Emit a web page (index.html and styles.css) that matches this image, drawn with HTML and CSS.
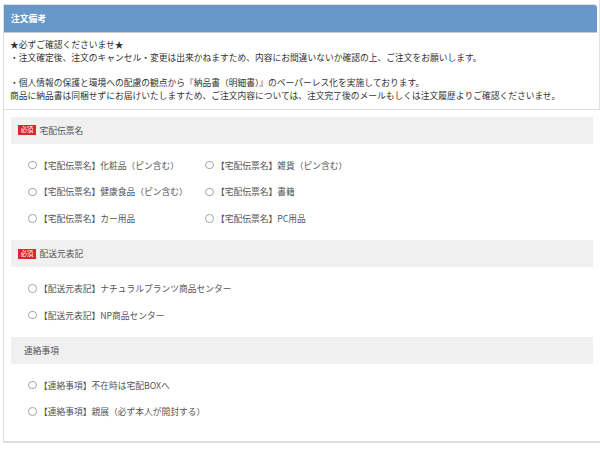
FILE: index.html
```html
<!DOCTYPE html>
<html lang="ja">
<head>
<meta charset="utf-8">
<title>注文備考</title>
<link rel="stylesheet" href="styles.css">
</head>
<body>
<div class="sheet">
  <div class="notice">
    <div class="panel">
      <div class="panel-heading">注文備考</div>
      <div class="panel-body">
        <p class="para">★必ずご確認くださいませ★<br>・注文確定後、注文のキャンセル・変更は出来かねますため、内容にお間違いないか確認の上、ご注文をお願いします。</p>
        <p class="para">・個人情報の保護と環境への配慮の観点から『納品書（明細書）』のペーパーレス化を実施しております。<br>商品に納品書は同梱せずにお届けいたしますため、ご注文内容については、注文完了後のメールもしくは注文履歴よりご確認くださいませ。</p>
      </div>
    </div>
  </div>
  <div class="fields">
    <div class="section">
      <div class="section-head"><span class="badge">必須</span><span class="label">宅配伝票名</span></div>
      <div class="options options-two">
        <label class="option"><span class="radio"></span>【宅配伝票名】化粧品（ピン含む）</label>
        <label class="option"><span class="radio"></span>【宅配伝票名】雑貨（ピン含む）</label>
        <label class="option"><span class="radio"></span>【宅配伝票名】健康食品（ピン含む）</label>
        <label class="option"><span class="radio"></span>【宅配伝票名】書籍</label>
        <label class="option"><span class="radio"></span>【宅配伝票名】カー用品</label>
        <label class="option"><span class="radio"></span>【宅配伝票名】PC用品</label>
      </div>
    </div>
    <div class="section">
      <div class="section-head"><span class="badge">必須</span><span class="label">配送元表記</span></div>
      <div class="options">
        <label class="option"><span class="radio"></span>【配送元表記】ナチュラルプランツ商品センター</label>
        <label class="option"><span class="radio"></span>【配送元表記】NP商品センター</label>
      </div>
    </div>
    <div class="section">
      <div class="section-head section-head-plain"><span class="label">連絡事項</span></div>
      <div class="options">
        <label class="option"><span class="radio"></span>【連絡事項】不在時は宅配BOXへ</label>
        <label class="option"><span class="radio"></span>【連絡事項】親展（必ず本人が開封する）</label>
      </div>
    </div>
  </div>
</div>
</body>
</html>
```
FILE: styles.css
```css
html, body {
  margin: 0;
  padding: 0;
  background: #ffffff;
}

body {
  font-family: "Noto Sans CJK JP", "Noto Sans", sans-serif;
  font-size: 8.75px;
  color: #333333;
  width: 600px;
  height: 450px;
  overflow: hidden;
}

.sheet {
  width: 600px;
}

.notice {
  padding-top: 4px;
  padding-right: 2px;
  border-right: 1px solid #e2e2e2;
}

.panel {
  margin-left: 3px;
  border-top: 1px solid #e0e0e0;
  border-left: 1px solid #dddddd;
  border-top-right-radius: 3px;
}

.panel-heading {
  height: 26.67px;
  display: flex;
  align-items: center;
  padding-left: 7px;
  background: #6698ca;
  color: #ffffff;
  font-weight: 700;
  border-top-right-radius: 3px;
  border-bottom: 1px solid #c9c9c9;
}

.panel-body {
  padding: 5px 6px 6.5px 6px;
  line-height: 13px;
}

.para {
  margin: 0;
}

.para + .para {
  margin-top: 12.4px;
}

.fields {
  margin-left: 3px;
  border-left: 1px solid #dddddd;
  border-top: 1px solid #dddddd;
  border-bottom: 2px solid #dddddd;
  padding: 7.6px 7px 7px 7px;
}

.section-head {
  height: 26.67px;
  display: flex;
  align-items: center;
  gap: 4px;
  padding-left: 7.3px;
  background: #f0f0f0;
  color: #555555;
}

.section-head-plain {
  padding-left: 13px;
}

.badge {
  display: flex;
  align-items: center;
  justify-content: center;
  width: 17.3px;
  height: 10px;
  background: #d9252b;
  color: #ffffff;
  font-size: 6.3px;
  line-height: 10px;
}

.options {
  display: grid;
  grid-template-columns: 177px;
  grid-auto-rows: 26.67px;
  padding: 8px 0 8.67px 17px;
  color: #555555;
}

.options-two {
  grid-template-columns: 177px 177px;
}

.option {
  display: flex;
  align-items: center;
  white-space: nowrap;
}

.radio {
  width: 6.5px;
  height: 6.5px;
  border: 1px solid #a5a5a5;
  border-radius: 50%;
  background: #ffffff;
  margin-right: 2.5px;
  flex: none;
}
```
